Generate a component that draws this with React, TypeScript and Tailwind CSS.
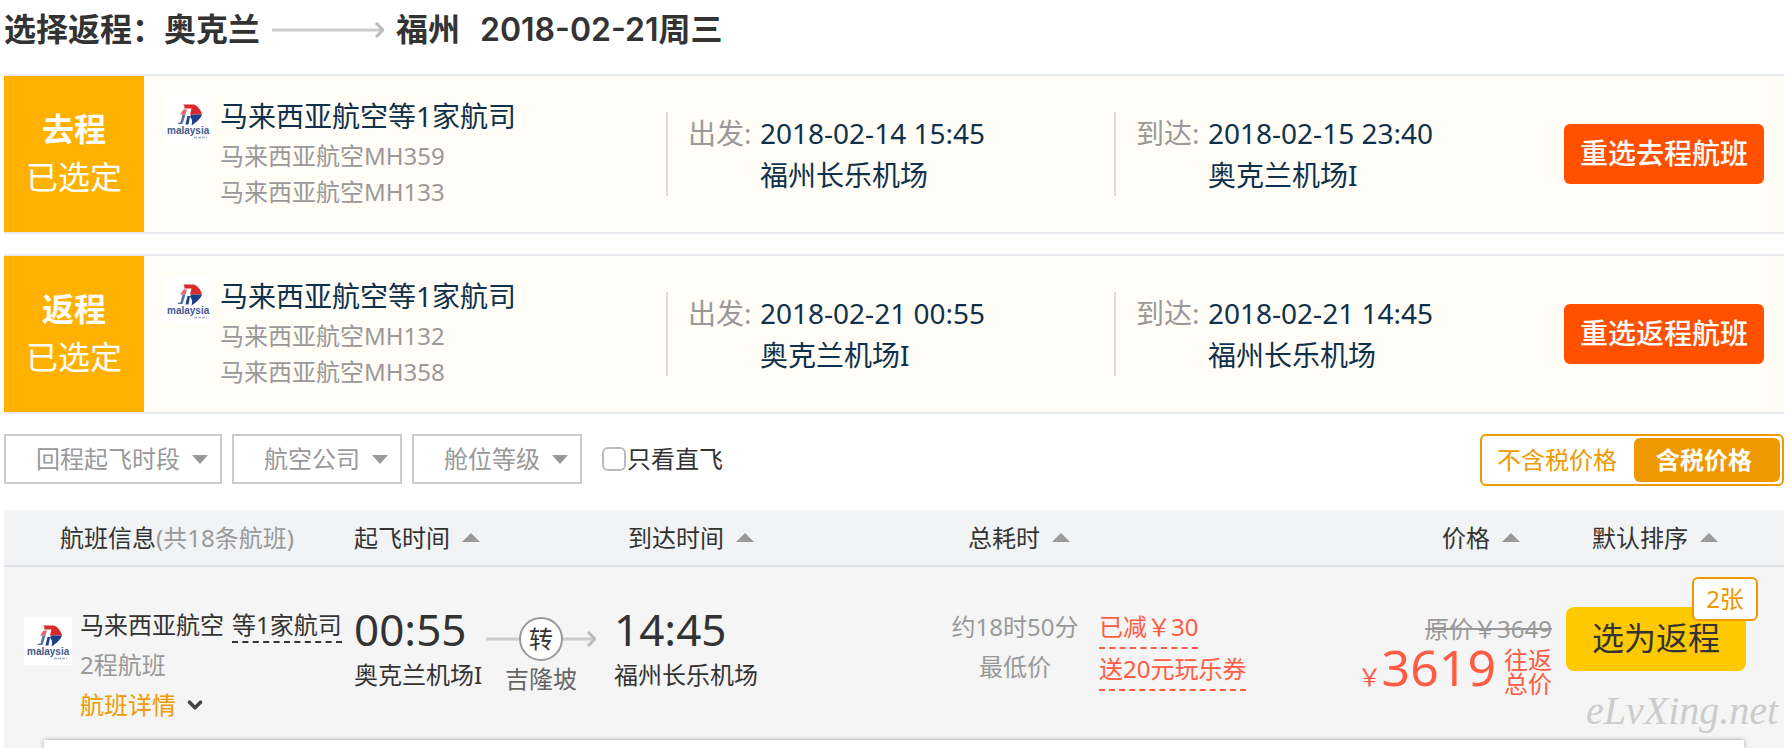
import { ChevronDown } from "lucide-react";

const selected = [
  {
    tab: "去程",
    airline: "马来西亚航空等1家航司",
    legs: ["马来西亚航空MH359", "马来西亚航空MH133"],
    depart: { time: "2018-02-14 15:45", airport: "福州长乐机场" },
    arrive: { time: "2018-02-15 23:40", airport: "奥克兰机场I" },
    action: "重选去程航班",
  },
  {
    tab: "返程",
    airline: "马来西亚航空等1家航司",
    legs: ["马来西亚航空MH132", "马来西亚航空MH358"],
    depart: { time: "2018-02-21 00:55", airport: "奥克兰机场I" },
    arrive: { time: "2018-02-21 14:45", airport: "福州长乐机场" },
    action: "重选返程航班",
  },
];

function AirlineLogo() {
  return (
    <svg viewBox="0 0 48 48" className="h-12 w-12 shrink-0" aria-hidden="true">
      <rect width="48" height="48" fill="#fff" />
      <path d="M19 8.500H30C34 10 37 14 38 18.500H26L27.500 12.500H20C21 11 20.500 9.500 19 8.500Z" fill="#d92b2b" />
      <path d="M19.500 13.500H23L21.500 18.500H16Z" fill="#e0696c" />
      <path d="M27 18.500H38C37 22 33 26 27.500 29.500C28.500 26 28.500 23 26 21Z" fill="#1d3f86" />
      <path d="M18.500 18.500H21.500L18.500 28H13.500L14.500 26.500H16.500Z" fill="#5a70a8" />
      <path d="M23.500 20L21.500 28.500H24.500L26 20Z" fill="#1d3f86" />
      <text x="3" y="38" fontSize="10" fontWeight="700" fontFamily="Liberation Sans" fill="#43598f">
        malaysia
      </text>
      <path d="M30 41.500H43" stroke="#a3aecb" strokeWidth="1.500" strokeDasharray="3 1" />
    </svg>
  );
}

function Triangle({ up = false }: { up?: boolean }) {
  return (
    <svg viewBox="0 0 18 9" className="h-[9px] w-[18px] shrink-0" aria-hidden="true">
      <path d={up ? "M0 9L9 0L18 9Z" : "M1 0H17L9 9Z"} fill="#999" />
    </svg>
  );
}

function SortButton({ label }: { label: string }) {
  return (
    <button className="inline-flex items-center gap-3">
      {label}
      <Triangle up />
    </button>
  );
}

function Filter({ label }: { label: string }) {
  return (
    <div className="relative">
      <select
        aria-label={label}
        className="block h-[50px] appearance-none border-2 border-[#ccc] bg-white pl-[30px] pr-10 text-2xl leading-[46px] text-[#999]"
      >
        <option>{label}</option>
      </select>
      <span className="pointer-events-none absolute inset-y-0 right-[13px] flex items-center">
        <Triangle />
      </span>
    </div>
  );
}

function Stop({ label, time, airport }: { label: string; time: string; airport: string }) {
  return (
    <div className="grid grid-cols-[72px_1fr] border-l-2 border-[#dcdcdc] pl-5 leading-[42px]">
      <span className="text-[#999]">{label}:</span>
      <span>{time}</span>
      <span className="col-start-2">{airport}</span>
    </div>
  );
}

function SelectedFlight({ flight }: { flight: (typeof selected)[number] }) {
  return (
    <section className="flex items-center border-y-2 border-[#e6eaef] bg-[#fffdf5] text-[28px] whitespace-nowrap text-[#10314b]">
      <div className="flex h-[156px] w-[140px] shrink-0 flex-col justify-center bg-[#ffb100] pb-0.5 text-center text-[32px] leading-[48px] text-white">
        <strong>{flight.tab}</strong>
        <span>已选定</span>
      </div>
      <div className="flex-[522] self-start">
        <div className="flex gap-2 pt-5 pl-5">
          <AirlineLogo />
          <div>
            <h2 className="pb-0.5 leading-10">{flight.airline}</h2>
            {flight.legs.map((leg) => (
              <p key={leg} className="text-2xl leading-9 text-[#999]">
                {leg}
              </p>
            ))}
          </div>
        </div>
      </div>
      <div className="flex-[448]">
        <Stop label="出发" {...flight.depart} />
      </div>
      <div className="flex-[450]">
        <Stop label="到达" {...flight.arrive} />
      </div>
      <button className="mr-5 h-[60px] w-[200px] shrink-0 rounded-md bg-[#ff5000] pb-0.5 font-medium text-white">
        {flight.action}
      </button>
    </section>
  );
}

function Transfer() {
  return (
    <div className="flex flex-col items-center pr-3.5">
      <div className="relative flex h-11 w-[110px] items-center justify-center">
        <svg viewBox="0 0 110 16" className="absolute h-4 w-[110px]" aria-hidden="true">
          <path d="M0 8H108" stroke="#ccc" strokeWidth="3" />
          <path d="M102 1L109 8L102 15" fill="none" stroke="#bbb" strokeWidth="3" />
        </svg>
        <span className="relative flex h-11 w-11 items-center justify-center rounded-full border-2 border-[#999] bg-white text-2xl">
          转
        </span>
      </div>
      <span className="leading-9 text-[#666]">吉隆坡</span>
    </div>
  );
}

function ResultsTable() {
  return (
    <table className="w-full table-fixed text-left text-2xl whitespace-nowrap">
      <colgroup>
        <col className="w-[350px]" />
        <col className="w-[128px]" />
        <col className="w-[132px]" />
        <col />
        <col className="w-[168px]" />
        <col className="w-[136px]" />
        <col />
        <col className="w-[232px]" />
      </colgroup>
      <thead>
        <tr className="h-14 border-b-2 border-[#dfe1e4] bg-[#f1f3f5]">
          <th className="pl-14 font-normal">
            航班信息<span className="text-[#999]">(共18条航班)</span>
          </th>
          <th colSpan={2} className="font-normal">
            <SortButton label="起飞时间" />
          </th>
          <th className="pl-[14px] font-normal">
            <SortButton label="到达时间" />
          </th>
          <th className="pl-2 text-center font-normal">
            <SortButton label="总耗时" />
          </th>
          <th colSpan={2} className="pr-8 text-right font-normal">
            <SortButton label="价格" />
          </th>
          <th className="pl-10 font-normal">
            <SortButton label="默认排序" />
          </th>
        </tr>
      </thead>
      <tbody>
        <tr className="h-[174px] align-top leading-10">
          <td className="pt-10">
            <div className="flex gap-2 pl-5">
              <div className="pt-[10px]">
                <AirlineLogo />
              </div>
              <div>
                <p className="flex items-start gap-2 pb-0.5 leading-9">
                  马来西亚航空
                  <span className="h-9 border-b-2 border-dashed border-[#333]">等1家航司</span>
                </p>
                <p className="text-[#999]">2程航班</p>
                <a href="#detail" className="flex items-center gap-2 text-[#ee9900]">
                  航班详情
                  <ChevronDown size={22} strokeWidth={4} className="text-[#444]" />
                </a>
              </div>
            </div>
          </td>
          <td className="pt-9">
            <p className="text-[44px] leading-[52px]">00:55</p>
            <p>奥克兰机场I</p>
          </td>
          <td className="pt-[50px]">
            <Transfer />
          </td>
          <td className="pt-9">
            <p className="text-[44px] leading-[52px]">14:45</p>
            <p>福州长乐机场</p>
          </td>
          <td className="pt-10 text-center text-[#999]">
            <p>约18时50分</p>
            <p>最低价</p>
          </td>
          <td className="pt-10 text-[#ff5c43]">
            <div className="flex flex-col items-start">
              <span className="border-b-2 border-dashed">已减￥30</span>
              <span className="border-b-2 border-dashed">送20元玩乐券</span>
            </div>
          </td>
          <td className="pt-12">
            <div className="flex flex-col items-end text-[#ff5c43]">
              <del className="leading-7 text-[#999]">原价￥3649</del>
              <div className="flex items-baseline leading-[48px]">
                <span>￥</span>
                <span className="text-[50px]">3619</span>
                <span className="ml-2 self-center text-2xl leading-6">
                  往返
                  <br />
                  总价
                </span>
              </div>
            </div>
          </td>
          <td className="pt-10 pl-[14px]">
            <div className="relative w-[180px]">
              <button className="h-16 w-full rounded-lg bg-[#ffc900] pb-0.5 text-[32px] text-[#333]">选为返程</button>
              <span className="absolute -top-[30px] -right-3 flex h-11 w-[66px] items-center justify-center rounded-md border-2 border-[#ee9900] bg-white text-[#ee9900]">
                2张
              </span>
            </div>
            <p className="pt-4 pl-5 font-['Liberation_Serif',serif] text-[40px] leading-[48px] text-[#ccc] italic">
              eLvXing.net
            </p>
          </td>
        </tr>
      </tbody>
    </table>
  );
}

export default function App() {
  return (
    <main className="pr-1.5 pl-1 font-['Noto_Sans','Noto_Sans_CJK_SC',sans-serif] text-[#333]">
      <h1 className="flex items-center pt-[10px] pb-6 font-['Inter','Noto_Sans_CJK_SC',sans-serif] text-[32px] leading-10 font-semibold">
        选择返程：奥克兰
        <svg viewBox="0 0 112 16" className="mx-3 h-4 w-28" aria-hidden="true">
          <path d="M0 8H110" stroke="#ccc" strokeWidth="3" />
          <path d="M104 1L111 8L104 15" fill="none" stroke="#bbb" strokeWidth="3" />
        </svg>
        福州
        <span className="ml-5">2018-02-21周三</span>
      </h1>

      <div className="flex flex-col gap-5">
        {selected.map((flight) => (
          <SelectedFlight key={flight.tab} flight={flight} />
        ))}
      </div>

      <div className="flex items-start justify-between py-5 text-2xl">
        <div className="flex items-center gap-[10px]">
          <Filter label="回程起飞时段" />
          <Filter label="航空公司" />
          <Filter label="舱位等级" />
          <label className="ml-[10px] flex items-center gap-px">
            <input
              type="checkbox"
              className="h-6 w-6 appearance-none rounded-md border-2 border-[#bbb] bg-white checked:bg-[#ee9900]"
            />
            只看直飞
          </label>
        </div>
        <div className="flex rounded-md border-2 border-[#ee9900] p-0.5">
          <button className="h-11 w-[150px] pr-1 text-[#ee9900]">不含税价格</button>
          <button className="h-11 w-[146px] rounded-md bg-[#ee9900] pr-1.5 font-semibold text-white">含税价格</button>
        </div>
      </div>

      <section className="mt-1 overflow-hidden bg-[#f5f5f5]">
        <ResultsTable />
        <div id="detail" className="mx-10 h-2 bg-white shadow-[0_0_4px_#999]" />
      </section>
    </main>
  );
}
